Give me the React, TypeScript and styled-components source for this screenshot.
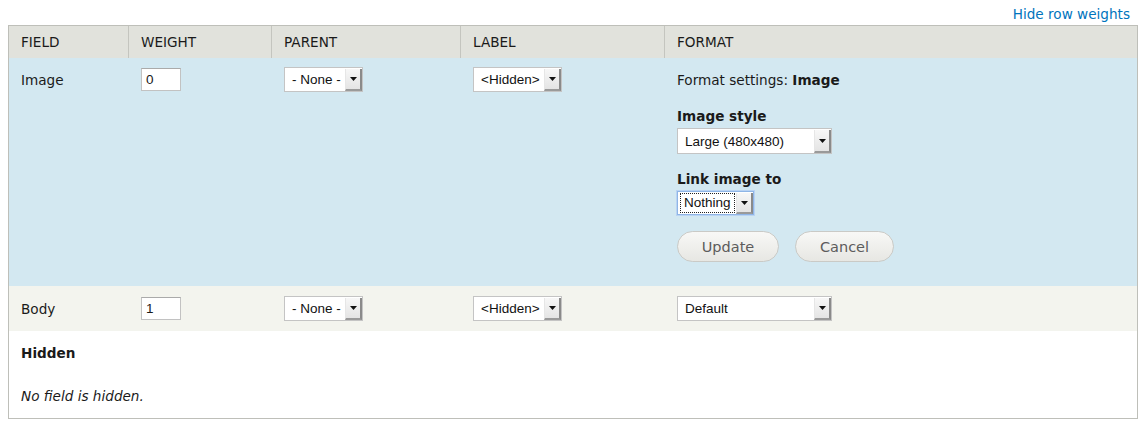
import styled, { createGlobalStyle } from "styled-components";

const GlobalStyle = createGlobalStyle`
  body {
    margin: 0 8px;
    background: #fff;
    font-family: "DejaVu Sans", sans-serif;
    font-size: 13.6px;
    color: #1a1a1a;
  }
`;

const COLS = "119px 143px 189px 204px 1fr";

type RowTone = "head" | "active" | "even";

const toneBg: Record<RowTone, string> = {
  head: "#e1e2dc",
  active: "#d3e8f1",
  even: "#f3f4ee",
};

export default function App(): JSX.Element {
  return (
    <>
      <GlobalStyle />
      <TopBar>
        <WeightsLink href="#">Hide row weights</WeightsLink>
      </TopBar>
      <Table>
        <Row tone="head">
          <HeadCell>FIELD</HeadCell>
          <HeadCell divided>WEIGHT</HeadCell>
          <HeadCell divided>PARENT</HeadCell>
          <HeadCell divided>LABEL</HeadCell>
          <HeadCell divided>FORMAT</HeadCell>
        </Row>

        <Row tone="active">
          <Cell>
            <CellText>Image</CellText>
          </Cell>
          <Cell divided>
            <WeightInput>0</WeightInput>
          </Cell>
          <Cell divided>
            <Select width={79}>- None -</Select>
          </Cell>
          <Cell divided>
            <Select width={89}>&lt;Hidden&gt;</Select>
          </Cell>
          <Cell divided>
            <FormatSettings>
              <CellText>
                Format settings: <strong>Image</strong>
              </CellText>
              <FieldLabel>Image style</FieldLabel>
              <Select width={155} height={26}>Large (480x480)</Select>
              <FieldLabel spaced>Link image to</FieldLabel>
              <Select width={77} height={24} focused>
                <FocusText>Nothing</FocusText>
              </Select>
              <Buttons>
                <Button width={102}>Update</Button>
                <Button width={99}>Cancel</Button>
              </Buttons>
            </FormatSettings>
          </Cell>
        </Row>

        <Row tone="even">
          <Cell compact>
            <CellText>Body</CellText>
          </Cell>
          <Cell divided compact>
            <WeightInput>1</WeightInput>
          </Cell>
          <Cell divided compact>
            <Select width={79}>- None -</Select>
          </Cell>
          <Cell divided compact>
            <Select width={89}>&lt;Hidden&gt;</Select>
          </Cell>
          <Cell divided compact>
            <Select width={155}>Default</Select>
          </Cell>
        </Row>

        <HiddenRegion>
          <RegionTitle>Hidden</RegionTitle>
          <EmptyNote>No field is hidden.</EmptyNote>
        </HiddenRegion>
      </Table>
    </>
  );
}

function Select({
  width,
  height = 25,
  focused = false,
  children,
}: {
  width: number;
  height?: number;
  focused?: boolean;
  children: React.ReactNode;
}): JSX.Element {
  return (
    <SelectBox $width={width} $height={height} $focused={focused}>
      <SelectValue>{children}</SelectValue>
      <SelectArrow>
        <svg width="7" height="4" viewBox="0 0 7 4">
          <path d="M0 0 H7 L3.5 4 Z" fill="#111" />
        </svg>
      </SelectArrow>
    </SelectBox>
  );
}

const TopBar = styled.div`
  display: flex;
  justify-content: flex-end;
  padding: 5px 8px 0 0;
  height: 20px;
  line-height: 18px;
`;

const WeightsLink = styled.a`
  color: #0074bd;
  text-decoration: none;
`;

const Table = styled.div`
  width: 1128px;
  border: 1px solid #bebfb9;
`;

const Row = styled.div<{ tone: RowTone }>`
  display: grid;
  grid-template-columns: ${COLS};
  background: ${(p) => toneBg[p.tone]};
`;

const HeadCell = styled.div<{ divided?: boolean }>`
  height: 32px;
  border-left: ${(p) => (p.divided ? "1px solid #c4c5bf" : "none")};
  padding: 0 12px;
  display: flex;
  align-items: center;
  color: #1a1a1a;
`;

const Cell = styled.div<{ divided?: boolean; compact?: boolean }>`
  padding: ${(p) => (p.compact ? "11px 12px 10px" : "10px 12px 24px")};
  padding-left: ${(p) => (p.divided ? "13px" : "12px")};
  display: flex;
  flex-direction: column;
  align-items: flex-start;
`;

const CellText = styled.div`
  line-height: 18px;
  margin-top: 3px;
  strong {
    font-weight: bold;
  }
`;

const WeightInput = styled.div`
  box-sizing: border-box;
  width: 40px;
  height: 23px;
  background: #fff;
  border: 1px solid #c2c2c2;
  border-top-color: #aaa;
  padding: 0 4px;
  font-family: "Liberation Sans", Arial, sans-serif;
  font-size: 13.5px;
  line-height: 21px;
`;

const SelectBox = styled.div<{ $width: number; $height: number; $focused: boolean }>`
  box-sizing: border-box;
  width: ${(p) => p.$width}px;
  height: ${(p) => p.$height}px;
  margin-top: -1px;
  display: flex;
  background: #fff;
  border: 1px solid ${(p) => (p.$focused ? "#8fb5e6" : "#c4c4c4")};
  box-shadow: ${(p) => (p.$focused ? "0 0 0 1px #b9d3f3" : "none")};
  font-family: "Liberation Sans", Arial, sans-serif;
  font-size: 13.5px;
  color: #111;
`;

const SelectValue = styled.div`
  flex: 1;
  display: flex;
  align-items: center;
  padding-left: 7px;
  white-space: nowrap;
  overflow: hidden;
`;

const SelectArrow = styled.div`
  width: 14px;
  display: flex;
  align-items: center;
  justify-content: center;
  background: linear-gradient(#f7f7f7, #e4e4e4);
  border-left: 1px solid #e6e6e6;
  border-right: 2px solid #8a8a8a;
  border-bottom: 2px solid #9a9a9a;
  margin: 1px 0 0 0;
`;

const FocusText = styled.span`
  outline: 1px dotted #222;
  outline-offset: 1px;
  margin-left: -3px;
  padding: 0 2px;
  line-height: 16px;
`;

const FormatSettings = styled.div`
  display: flex;
  flex-direction: column;
  align-items: flex-start;
`;

const FieldLabel = styled.div<{ spaced?: boolean }>`
  font-weight: bold;
  line-height: 18px;
  margin-top: ${(p) => (p.spaced ? "16px" : "18px")};
  margin-bottom: 4px;
`;

const Buttons = styled.div`
  display: flex;
  gap: 16px;
  margin-top: 16px;
`;

const Button = styled.button<{ width: number }>`
  box-sizing: border-box;
  width: ${(p) => p.width}px;
  height: 31px;
  border: 1px solid #cacac6;
  border-radius: 16px;
  background: linear-gradient(#f8f8f6, #e7e7e3);
  color: #5c5c5c;
  font-family: "DejaVu Sans", sans-serif;
  font-size: 14.5px;
  padding: 0;
  cursor: pointer;
`;

const HiddenRegion = styled.div`
  background: #fff;
  padding: 13px 12px 13px;
  display: flex;
  flex-direction: column;
  gap: 25px;
`;

const RegionTitle = styled.div`
  font-weight: bold;
  line-height: 18px;
`;

const EmptyNote = styled.div`
  font-style: italic;
  line-height: 18px;
`;
